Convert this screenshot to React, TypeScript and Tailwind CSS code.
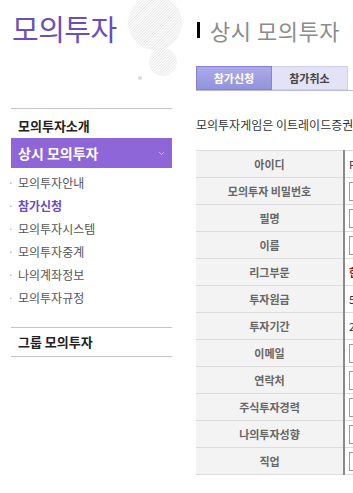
import { ChevronDown } from 'lucide-react'

const subMenu = ['모의투자안내', '참가신청', '모의투자시스템', '모의투자중계', '나의계좌정보', '모의투자규정']

type Row = { label: string; value?: string; red?: boolean }

const rows: Row[] = [
    { label: '아이디', value: 'P' },
    { label: '모의투자 비밀번호' },
    { label: '필명' },
    { label: '이름' },
    { label: '리그부문', value: '한', red: true },
    { label: '투자원금', value: '5' },
    { label: '투자기간', value: '2' },
    { label: '이메일' },
    { label: '연락처' },
    { label: '주식투자경력' },
    { label: '나의투자성향' },
    { label: '직업' },
]

const Dots = () => (
    <svg className="absolute left-[112px] top-0" width="64" height="84" viewBox="0 0 64 84">
        <defs>
            <pattern id="hatch" width="2" height="2" patternUnits="userSpaceOnUse" patternTransform="rotate(45)">
                <rect width="1" height="2" fill="#e8e8e8" />
            </pattern>
        </defs>
        <circle cx="32" cy="23" r="27" fill="url(#hatch)" />
        <circle cx="40" cy="62" r="14" fill="url(#hatch)" />
        <circle cx="17" cy="78" r="2" fill="#dadada" />
    </svg>
)

const App = () => {
    return (
        <div className="relative w-[353px] h-[493px] overflow-hidden bg-white flex font-['Noto_Sans_CJK_KR',sans-serif]">
            <aside className="relative w-[161px] ml-[11px] shrink-0">
                <Dots />
                <h1 className="relative pt-[9px] pl-[1px] h-[108px] text-[29px] leading-[38px] text-[#6a4dbf] tracking-[-0.5px]">
                    모의투자
                </h1>
                <div className="border-t border-[#c4c4c4] pt-[6px] h-[30px] pl-[7px] text-[13px] font-bold text-[#222] leading-[22px]">
                    모의투자소개
                </div>
                <div className="h-[30px] bg-[#8f66d7] flex items-center justify-between pl-[7px] pr-[6px] text-white text-[14px] font-bold">
                    <span>상시 모의투자</span>
                    <ChevronDown size={9} strokeWidth={2} className="text-[#e6dcf7]" />
                </div>
                <ul className="pt-[3px] pb-[18px] text-[12px] text-[#555] leading-[23px] -ml-[3px]">
                    {subMenu.map((m) => (
                        <li key={m} className="flex items-center">
                            <span className="w-[10px] text-[#aaa] text-[10px]">·</span>
                            <span className={m === '참가신청' ? 'font-bold text-[#6b4bc8]' : ''}>{m}</span>
                        </li>
                    ))}
                </ul>
                <div className="border-y border-[#c4c4c4] h-[30px] pl-[7px] text-[13px] font-bold text-[#222] leading-[27px]">
                    그룹 모의투자
                </div>
            </aside>

            <main className="ml-[24px] w-[400px] shrink-0">
                <div className="flex items-center h-[28px] mt-[16px]">
                    <span className="w-[3px] h-[16px] bg-black ml-[1px]" />
                    <span className="ml-[10px] text-[22px] text-[#8c8c8c] tracking-[0.5px]">상시 모의투자</span>
                </div>
                <div className="flex mt-[22px] border-b border-[#b9b9e6]">
                    <div className="w-[76px] h-[24px] flex items-center justify-center bg-gradient-to-b from-[#aaaaea] to-[#9393dc] border border-[#8383d2] text-white text-[11px] font-bold">
                        참가신청
                    </div>
                    <div className="w-[76px] h-[24px] flex items-center justify-center bg-[#e3e3f6] border border-l-0 border-[#d0d0ee] text-[#444] text-[11px] font-bold">
                        참가취소
                    </div>
                </div>
                <p className="mt-[24px] text-[12px] text-[#333] whitespace-nowrap leading-[20px]">
                    모의투자게임은 이트레이드증권에서 운영하는 모의투자 서비스입니다.
                </p>
                <table className="mt-[15px] border-collapse text-[11px]">
                    <tbody>
                        {rows.map((r) => (
                            <tr key={r.label} className="h-[27px] border-y border-[#dcdcdc]">
                                <td className="w-[148px] bg-[#f3f3f3] text-center font-bold text-[#666] border-r-2 border-[#8a8a8a]">
                                    {r.label}
                                </td>
                                <td className="pl-[4px] w-[200px]">
                                    {r.value ? (
                                        <span className={r.red ? 'text-[#a01010] font-bold' : 'text-[#333]'}>{r.value}</span>
                                    ) : (
                                        <div className="w-[120px] h-[19px] border border-[#9a9a9a] bg-white" />
                                    )}
                                </td>
                            </tr>
                        ))}
                    </tbody>
                </table>
            </main>
        </div>
    )
}

export default App
